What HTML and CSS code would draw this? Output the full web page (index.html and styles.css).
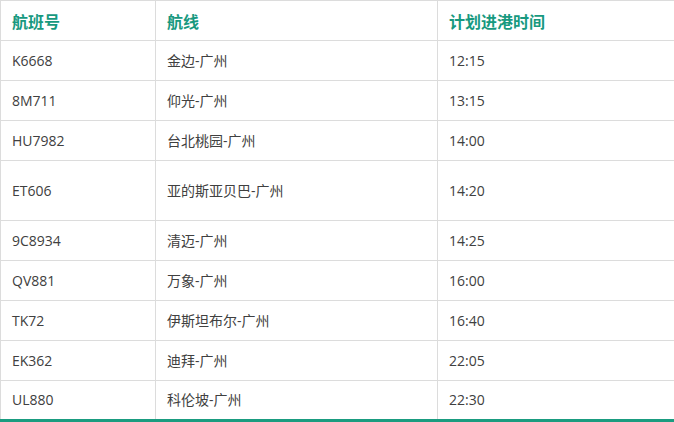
FILE: index.html
```html
<!DOCTYPE html>
<html lang="zh-CN">
<head>
<meta charset="utf-8">
<link rel="stylesheet" href="styles.css">
</head>
<body>
<div class="wrap">
<table class="flights">
  <colgroup><col class="c1"><col class="c2"><col class="c3"></colgroup>
  <thead>
    <tr><th>航班号</th><th>航线</th><th>计划进港时间</th></tr>
  </thead>
  <tbody>
    <tr><td>K6668</td><td>金边-广州</td><td>12:15</td></tr>
    <tr><td>8M711</td><td>仰光-广州</td><td>13:15</td></tr>
    <tr><td>HU7982</td><td>台北桃园-广州</td><td>14:00</td></tr>
    <tr class="tall"><td>ET606</td><td>亚的斯亚贝巴-广州</td><td>14:20</td></tr>
    <tr><td>9C8934</td><td>清迈-广州</td><td>14:25</td></tr>
    <tr><td>QV881</td><td>万象-广州</td><td>16:00</td></tr>
    <tr><td>TK72</td><td>伊斯坦布尔-广州</td><td>16:40</td></tr>
    <tr><td>EK362</td><td>迪拜-广州</td><td>22:05</td></tr>
    <tr class="last"><td>UL880</td><td>科伦坡-广州</td><td>22:30</td></tr>
  </tbody>
</table>
</div>
</body>
</html>
```

FILE: styles.css
```css
html, body {
  margin: 0;
  padding: 0;
  background: #fff;
}
body {
  font-family: "Open Sans", "Noto Sans CJK SC", sans-serif;
  color: #333;
  overflow: hidden;
}
.wrap {
  width: 680px;
  border-bottom: 3px solid #1a9c80;
}
.flights {
  width: 680px;
  border-collapse: collapse;
  table-layout: fixed;
}
.c1 { width: 155px; }
.c2 { width: 282px; }
.c3 { width: 243px; }
.flights th, .flights td {
  border: 1px solid #dcdcdc;
  padding: 0 11px;
  text-align: left;
  vertical-align: middle;
  line-height: 18px;
}
.flights tr { height: 40px; }
.flights tr.tall { height: 60px; }
.flights tr.last { height: 38px; }
.flights tr.last td { border-bottom: 0; }
.flights th {
  font-size: 16px;
  font-weight: bold;
  color: #17997f;
  font-family: "Noto Sans CJK SC", sans-serif;
}
.flights td {
  font-size: 14px;
  color: #404040;
}
```
